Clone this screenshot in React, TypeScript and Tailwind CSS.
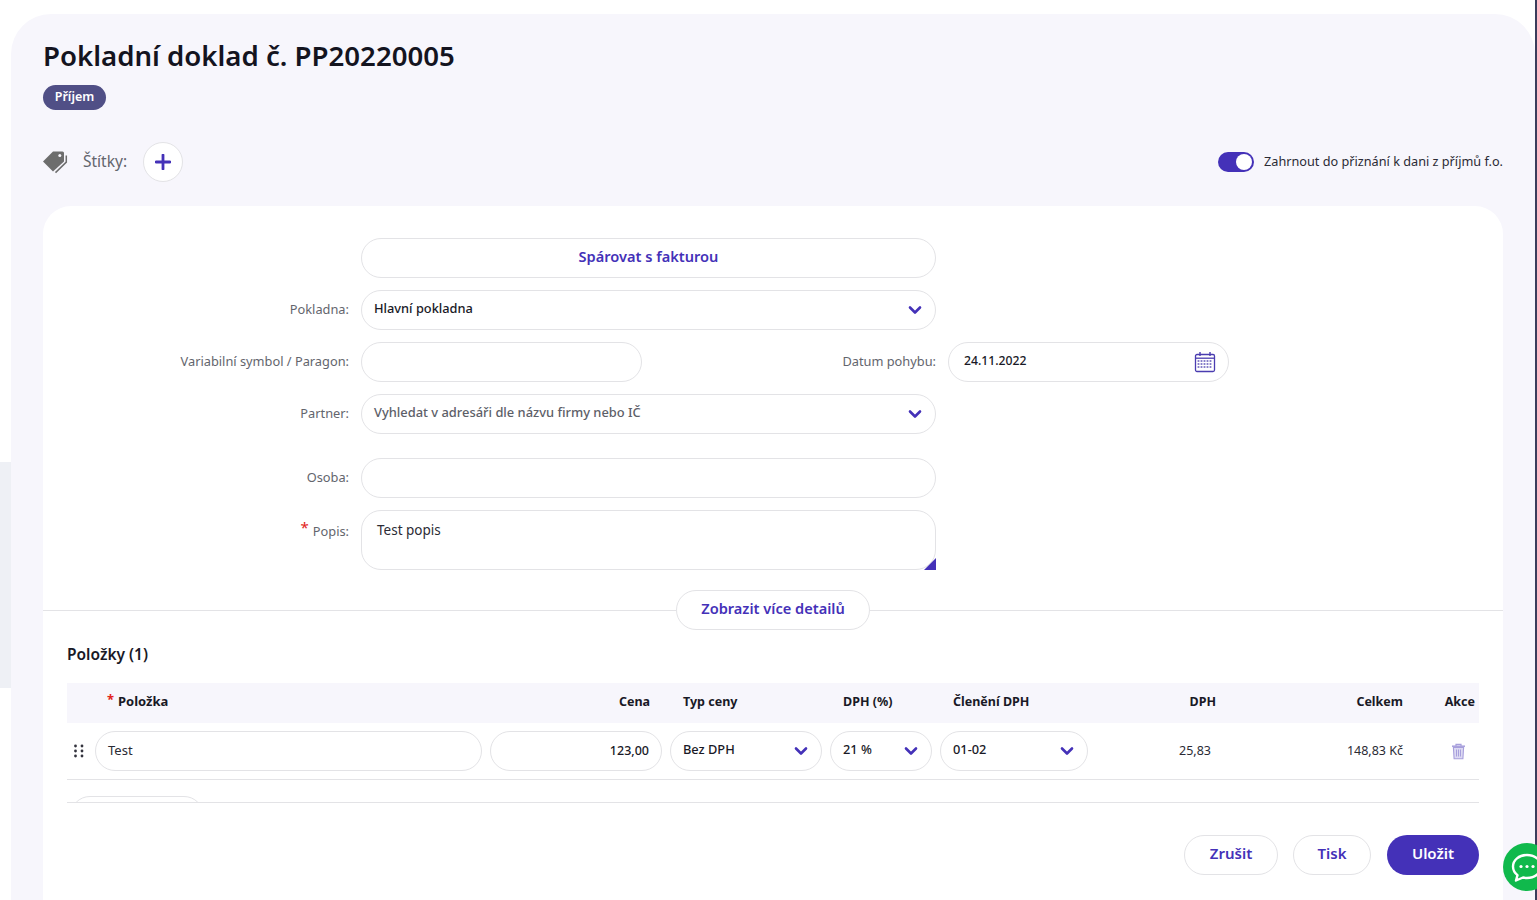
import React from "react";

const font = { fontFamily: '"Noto Sans", "Open Sans", sans-serif' };

const Chevron = () => (
  <svg width="14" height="10" viewBox="0 0 14 10" fill="none" className="shrink-0">
    <path d="M2 2.5 L7 7.5 L12 2.5" stroke="#4431b8" strokeWidth="2.6" strokeLinecap="round" strokeLinejoin="round" />
  </svg>
);

const Pill = ({ className = "", children }: { className?: string; children?: React.ReactNode }) => (
  <div className={`h-10 rounded-[20px] border border-[#e3e3e6] bg-white flex items-center ${className}`}>{children}</div>
);

const Select = ({ text, className = "", muted = false, pad = "pl-3 pr-[13px]" }: { text: string; className?: string; muted?: boolean; pad?: string }) => (
  <Pill className={`justify-between ${pad} ${className}`}>
    <span className={`pb-[2px] font-medium ${muted ? "text-[12.900px] text-[#5d6068]" : "text-[12.8px] text-[#191926]"}`}>{text}</span>
    <Chevron />
  </Pill>
);

const Row = ({ label, children, className = "" }: { label: string; children: React.ReactNode; className?: string }) => (
  <div className={`flex items-center gap-3 ${className}`}>
    <div className="w-[306px] text-right text-[12.8px] text-[#63656d] shrink-0">{label}:</div>
    {children}
  </div>
);

const Calendar = () => (
  <svg width="22" height="22" viewBox="0 0 22 22" fill="none" className="ml-[1px]">
    <rect x="1.5" y="3.5" width="19" height="17" rx="1.5" stroke="#4a3cb0" strokeWidth="1.3" />
    <path d="M2 7.200h18" stroke="#4a3cb0" strokeWidth="1.300" />
    <path d="M6 1v4M16 1v4" stroke="#4a3cb0" strokeWidth="1.4" />
    {[10, 13, 16].map((y) =>
      [4.5, 7.5, 10.5, 13.5, 16.5].map((x) => <rect key={`${x}-${y}`} x={x - 0.9} y={y - 0.9} width="1.8" height="1.8" fill="#7a70c4" />)
    )}
  </svg>
);

const Trash = () => (
  <svg width="15" height="17" viewBox="0 0 15 17" fill="none">
    <path d="M1 3.2h13" stroke="#a79fdc" strokeWidth="1.5" />
    <path d="M5 3V1.4h5V3" stroke="#a79fdc" strokeWidth="1.2" />
    <path d="M2.4 4.5h10.2l-.7 11.2H3.1z" fill="#dcd9f2" stroke="#a79fdc" strokeWidth="1.1" />
    <path d="M5.5 6.5v7M7.5 6.5v7M9.5 6.5v7" stroke="#a79fdc" strokeWidth="1" />
  </svg>
);

const Tag = () => (
  <svg width="26" height="24" viewBox="0 0 26 24" fill="none" className="-ml-px">
    <path d="M11 1.5h9.5a1.5 1.5 0 0 1 1.500 1.500v8.500L11 21.500 1 11.500z" fill="#6d6d6d" />
    <circle cx="17.800" cy="5.600" r="1.500" fill="#f7f6fc" />
    <path d="M24.300 5.500v6.600L13.500 22.600" stroke="#6d6d6d" strokeWidth="1.500" />
  </svg>
);

const Grip = () => (
  <svg width="10" height="14" viewBox="0 0 10 14" fill="#33333d">
    {[2, 7, 12].map((y) => [1.5, 8].map((x) => <circle key={`${x}-${y}`} cx={x} cy={y} r="1.400" />))}
  </svg>
);

const Chat = () => (
  <svg width="48" height="48" viewBox="0 0 48 48" fill="none">
    <circle cx="24" cy="24" r="24" fill="#10b94c" />
    <path d="M24 12c-8 0-14 5-14 11.500 0 3.500 1.700 6.500 4.500 8.600l-1.500 5.400 7-3c1.300.3 2.600.5 4 .5 8 0 14-5 14-11.500S32 12 24 12z" fill="#10b94c" stroke="#fff" strokeWidth="2.400" strokeLinejoin="round" />
    <circle cx="18" cy="23.500" r="1.600" fill="#fff" />
    <circle cx="24" cy="23.500" r="1.600" fill="#fff" />
    <circle cx="30" cy="23.500" r="1.600" fill="#fff" />
  </svg>
);

const cols = "grid grid-cols-[20px_387px_172px_152px_102px_148px_120px_179px_68px] gap-x-2";

export default function App() {
  return (
    <div style={font} className="relative h-[900px] overflow-hidden flex bg-white text-[#191926]">
      <div className="w-[11px] shrink-0 pt-[462px]">
        <div className="h-[226px] bg-[#eef0f5]" />
      </div>
      <main className="flex-1 mt-[14px] rounded-t-[40px] bg-[#f7f6fc] pl-8 pr-8 min-w-0">
        <h1 className="pt-5 text-[27.600px] leading-[42px] font-semibold text-[#14141f]">Pokladní doklad č. PP20220005</h1>
        <div className="mt-[9px] w-[63px] h-[25px] rounded-full bg-[#504f86] flex items-center justify-center text-[12.5px] font-semibold text-white">Příjem</div>
        <div className="mt-[32px] h-10 flex items-center">
          <Tag />
          <span className="ml-[15px] text-[15.500px] text-[#63656d]">Štítky:</span>
          <button className="ml-[16px] w-10 h-10 rounded-full bg-white border border-[#e3e3e6] flex items-center justify-center">
            <svg width="16" height="16" viewBox="0 0 16 16"><path d="M8 1v14M1 8h14" stroke="#4431b8" strokeWidth="2.800" strokeLinecap="round" /></svg>
          </button>
          <div className="ml-auto flex items-center">
            <div className="w-9 h-5 rounded-full bg-[#4431b8] flex items-center justify-end pr-[2px]">
              <div className="w-4 h-4 rounded-full bg-white" />
            </div>
            <span className="ml-[10px] text-[12.700px] text-[#2b2b35]">Zahrnout do přiznání k dani z příjmů f.o.</span>
          </div>
        </div>
        <section className="mt-6 w-[1460px] h-[700px] rounded-t-[28px] bg-white">
          <div className="pt-8">
            <div className="flex flex-col">
              <div className="flex gap-3">
                <div className="w-[306px]" />
                <Pill className="w-[575px] justify-center pb-[3px] text-[14.600px] font-semibold text-[#4431b8]">Spárovat s fakturou</Pill>
              </div>
              <Row label="Pokladna" className="mt-3">
                <Select text="Hlavní pokladna" className="w-[575px]" />
              </Row>
              <Row label="Variabilní symbol / Paragon" className="mt-3">
                <Pill className="w-[281px]" />
                <div className="w-[282px] text-right text-[12.8px] text-[#63656d]">Datum pohybu:</div>
                <Pill className="w-[281px] justify-between pl-[15px] pr-[12px]">
                  <span className="pb-[2px] text-[12.200px] font-medium">24.11.2022</span>
                  <Calendar />
                </Pill>
              </Row>
              <Row label="Partner" className="mt-3">
                <Select text="Vyhledat v adresáři dle názvu firmy nebo IČ" muted className="w-[575px]" />
              </Row>
              <Row label="Osoba" className="mt-6">
                <Pill className="w-[575px]" />
              </Row>
              <div className="mt-3 flex gap-3">
                <div className="w-[306px] pt-[9px] text-right text-[12.8px] text-[#63656d]">
                  <span className="text-[#e2231a] text-[15px] mr-1 relative -top-[3px]">*</span>Popis:
                </div>
                <div className="relative w-[575px] h-[60px] rounded-[20px] border border-[#e3e3e6] pl-[15px] pt-[10px] text-[13.500px] leading-[18px] text-[#2b2b35]">
                  Test popis
                  <svg className="absolute -right-px -bottom-px" width="12" height="12" viewBox="0 0 12 12"><path d="M12 0v12H0z" fill="#4431b8" /></svg>
                </div>
              </div>
            </div>
          </div>
          <div className="mt-5 flex items-center">
            <div className="flex-1 h-px bg-[#e3e3e6]" />
            <button className="w-[194px] h-10 rounded-[20px] border border-[#e3e3e6] pb-[3px] text-[14.600px] font-semibold text-[#4431b8] bg-white">Zobrazit více detailů</button>
            <div className="flex-1 h-px bg-[#e3e3e6]" />
          </div>
          <div className="px-6">
            <h2 className="mt-[13px] text-[15.500px] leading-[22px] font-semibold text-[#191926]">Položky (1)</h2>
            <div className={`${cols} mt-[18px] h-10 items-center pb-[2px] bg-[#f7f6fc] text-[12.5px] font-bold text-[#191926]`}>
              <div />
              <div className="pl-3 text-[13px]"><span className="text-[#e2231a] mr-1 relative -top-[2px]">*</span>Položka</div>
              <div className="text-right pr-3">Cena</div>
              <div className="pl-[13px]">Typ ceny</div>
              <div className="pl-[13px]">DPH (%)</div>
              <div className="pl-[13px]">Členění DPH</div>
              <div className="text-right">DPH</div>
              <div className="text-right">Celkem</div>
              <div className="text-right pr-1">Akce</div>
            </div>
            <div className={`${cols} h-[57px] pt-2 border-b border-[#e3e3e6] text-[12.5px]`}>
              <div className="h-10 flex items-center pl-[7px]"><Grip /></div>
              <Pill className="pl-3 text-[13px] text-[#2b2b35]">Test</Pill>
              <Pill className="justify-end pr-3 font-medium">123,00</Pill>
              <Select text="Bez DPH" />
              <Select text="21 %" />
              <Select text="01-02" />
              <div className="h-10 flex items-center justify-end pr-[5px] text-[#2b2b35]">25,83</div>
              <div className="h-10 flex items-center justify-end text-[#2b2b35]">148,83 Kč</div>
              <div className="h-10 flex items-center justify-end pr-[13px]"><Trash /></div>
            </div>
            <div className="h-[23px] pt-4 overflow-hidden border-b border-[#e3e3e6]">
              <div className="ml-[3px] w-[134px] h-10 rounded-[20px] border border-[#e3e3e6]" />
            </div>
            <div className="mt-8 flex justify-end text-[15px] font-semibold">
              <button className="w-[94px] h-10 rounded-[20px] border border-[#e3e3e6] pb-[3px] text-[#4431b8]">Zrušit</button>
              <button className="ml-[15px] w-[78px] h-10 rounded-[20px] border border-[#e3e3e6] pb-[3px] text-[#4431b8]">Tisk</button>
              <button className="ml-4 w-[92px] h-10 rounded-[20px] bg-[#4431b8] pb-[3px] text-white">Uložit</button>
            </div>
          </div>
        </section>
      </main>
      <div className="w-[2px] shrink-0 bg-[#3a3d5c]" />
      <div className="absolute left-[1503px] top-[843px]"><Chat /></div>
    </div>
  );
}
